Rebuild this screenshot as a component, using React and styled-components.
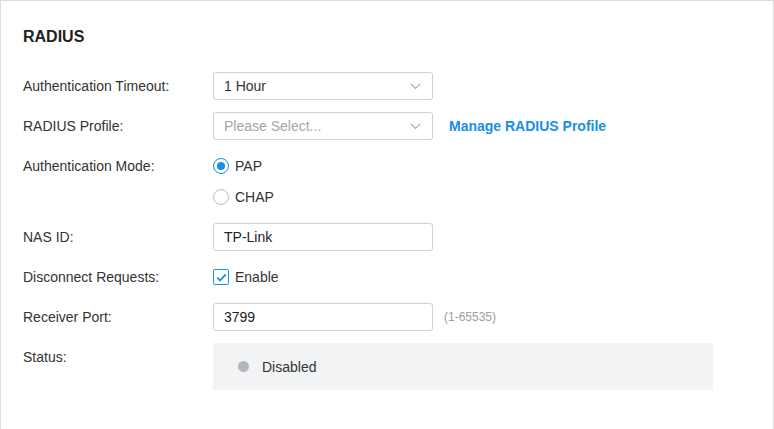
import React from "react";
import styled, { createGlobalStyle } from "styled-components";

const GlobalStyle = createGlobalStyle`
  html, body {
    margin: 0;
    padding: 0;
    background: #fff;
  }
  body {
    font-family: "Liberation Sans", Arial, sans-serif;
    color: #333;
  }
`;

const Chevron = () => (
  <svg width="11" height="7" viewBox="0 0 11 7">
    <path d="M1 1l4.5 4.5L10 1" fill="none" stroke="#a8abb0" strokeWidth="1.2" />
  </svg>
);

const Check = () => (
  <svg width="11" height="9" viewBox="0 0 11 9">
    <path d="M1.2 4.6l2.9 2.8L9.8 1.4" fill="none" stroke="#1a8fe3" strokeWidth="1.8" />
  </svg>
);

const App = () => {
  return (
    <>
      <GlobalStyle />
      <Panel>
        <Titulo>RADIUS</Titulo>
        <Form>
          <Row>
            <Label>Authentication Timeout:</Label>
            <Select>
              <span>1 Hour</span>
              <Chevron />
            </Select>
          </Row>
          <Row>
            <Label>RADIUS Profile:</Label>
            <Select placeholder>
              <span>Please Select...</span>
              <Chevron />
            </Select>
            <Enlace>Manage RADIUS Profile</Enlace>
          </Row>
          <Row>
            <Label>Authentication Mode:</Label>
            <Options>
              <Option>
                <Radio checked />
                <span>PAP</span>
              </Option>
              <Option>
                <Radio />
                <span>CHAP</span>
              </Option>
            </Options>
          </Row>
          <Row>
            <Label>NAS ID:</Label>
            <Input>TP-Link</Input>
          </Row>
          <Row>
            <Label>Disconnect Requests:</Label>
            <Option>
              <Checkbox>
                <Check />
              </Checkbox>
              <span>Enable</span>
            </Option>
          </Row>
          <Row>
            <Label>Receiver Port:</Label>
            <Input>3799</Input>
            <Hint>(1-65535)</Hint>
          </Row>
          <Row>
            <Label>Status:</Label>
            <StatusBox>
              <Dot />
              <span>Disabled</span>
            </StatusBox>
          </Row>
        </Form>
      </Panel>
    </>
  );
};

const Panel = styled.div`
  box-sizing: border-box;
  width: 774px;
  height: 429px;
  border: 1px solid #dcdcdc;
  border-bottom: none;
  padding: 26px 22px 0;
`;

const Titulo = styled.h2`
  margin: 0;
  font-size: 16px;
  line-height: 20px;
  font-weight: bold;
  color: #222;
`;

const Form = styled.div`
  display: flex;
  flex-direction: column;
  gap: 12px;
  margin-top: 25px;
`;

const Row = styled.div`
  display: flex;
  align-items: flex-start;
  font-size: 14px;
`;

const Label = styled.div`
  width: 190px;
  flex-shrink: 0;
  line-height: 28px;
  color: #333;
`;

const Select = styled.div`
  box-sizing: border-box;
  width: 220px;
  height: 28px;
  border: 1px solid #cfd1d4;
  border-radius: 3px;
  padding: 0 11px 0 10px;
  display: flex;
  align-items: center;
  justify-content: space-between;
  color: ${(p) => (p.placeholder ? "#a3a6ab" : "#333")};
`;

const Input = styled.div`
  box-sizing: border-box;
  width: 220px;
  height: 28px;
  border: 1px solid #cfd1d4;
  border-radius: 3px;
  padding: 0 10px;
  line-height: 26px;
  color: #222;
`;

const Enlace = styled.a`
  margin-left: 16px;
  line-height: 28px;
  font-weight: bold;
  color: #1a8fe3;
  cursor: pointer;
`;

const Hint = styled.span`
  margin-left: 11px;
  line-height: 28px;
  font-size: 12px;
  color: #9a9da2;
`;

const Options = styled.div`
  display: flex;
  flex-direction: column;
  gap: 3px;
`;

const Option = styled.label`
  display: flex;
  align-items: center;
  gap: 6px;
  height: 28px;
  color: #333;
`;

const Radio = styled.span`
  box-sizing: border-box;
  width: 16px;
  height: 16px;
  border-radius: 50%;
  border: 1px solid ${(p) => (p.checked ? "#1a8fe3" : "#b9bcc0")};
  display: flex;
  align-items: center;
  justify-content: center;

  &::after {
    content: "";
    display: ${(p) => (p.checked ? "block" : "none")};
    width: 8px;
    height: 8px;
    border-radius: 50%;
    background: #1a8fe3;
  }
`;

const Checkbox = styled.span`
  box-sizing: border-box;
  width: 16px;
  height: 16px;
  border: 1px solid #1a8fe3;
  border-radius: 2px;
  display: flex;
  align-items: center;
  justify-content: center;
`;

const StatusBox = styled.div`
  box-sizing: border-box;
  width: 500px;
  height: 47px;
  background: #f2f3f5;
  display: flex;
  align-items: center;
  gap: 13px;
  padding-left: 25px;
  color: #333;
`;

const Dot = styled.span`
  width: 11px;
  height: 11px;
  border-radius: 50%;
  background: #b3b6ba;
`;

export default App;
